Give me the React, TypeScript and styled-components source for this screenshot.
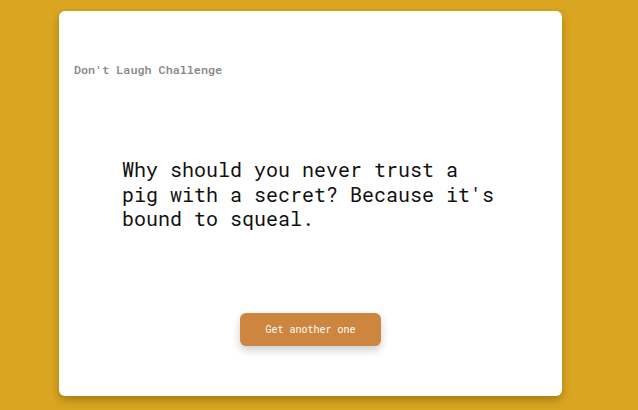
import React from "react";
import styled, { createGlobalStyle } from "styled-components";

const GlobalStyle = createGlobalStyle`
  html, body {
    margin: 0;
    padding: 0;
    background: #daa520;
    font-family: "Roboto Mono", "DejaVu Sans Mono", "Liberation Mono", monospace;
  }
  * { box-sizing: border-box; }
`;

const Page = styled.div`
  width: 638px;
  height: 410px;
  display: flex;
  justify-content: center;
  align-items: flex-start;
  padding: 11px 17px 0 0;
`;

const Card = styled.div`
  width: 503px;
  height: 385px;
  background: #ffffff;
  border-radius: 6px;
  box-shadow: 0 4px 8px rgba(0, 0, 0, 0.25);
  padding: 0 15px;
  display: flex;
  flex-direction: column;
`;

const Title = styled.h1`
  margin: 52px 0 0;
  font-size: 11.75px;
  line-height: 14px;
  font-weight: 600;
  color: #8a8a8a;
`;

const Joke = styled.p`
  margin: 80px 0 0;
  padding: 0 48px;
  font-size: 20px;
  line-height: 24.5px;
  font-weight: 400;
  color: #111111;
`;

const Actions = styled.div`
  margin-top: auto;
  margin-bottom: 50px;
  display: flex;
  justify-content: center;
`;

const Button = styled.button`
  width: 141px;
  height: 33px;
  border: none;
  border-radius: 6px;
  background: #cd853f;
  color: #ffffff;
  font-family: inherit;
  font-size: 10px;
  box-shadow: 0 4px 8px rgba(0, 0, 0, 0.2);
  cursor: pointer;
`;

export default function App() {
  return (
    <>
      <GlobalStyle />
      <Page>
        <Card>
          <Title>Don't Laugh Challenge</Title>
          <Joke>
            Why should you never trust a pig with a secret? Because it's bound to squeal.
          </Joke>
          <Actions>
            <Button>Get another one</Button>
          </Actions>
        </Card>
      </Page>
    </>
  );
}
